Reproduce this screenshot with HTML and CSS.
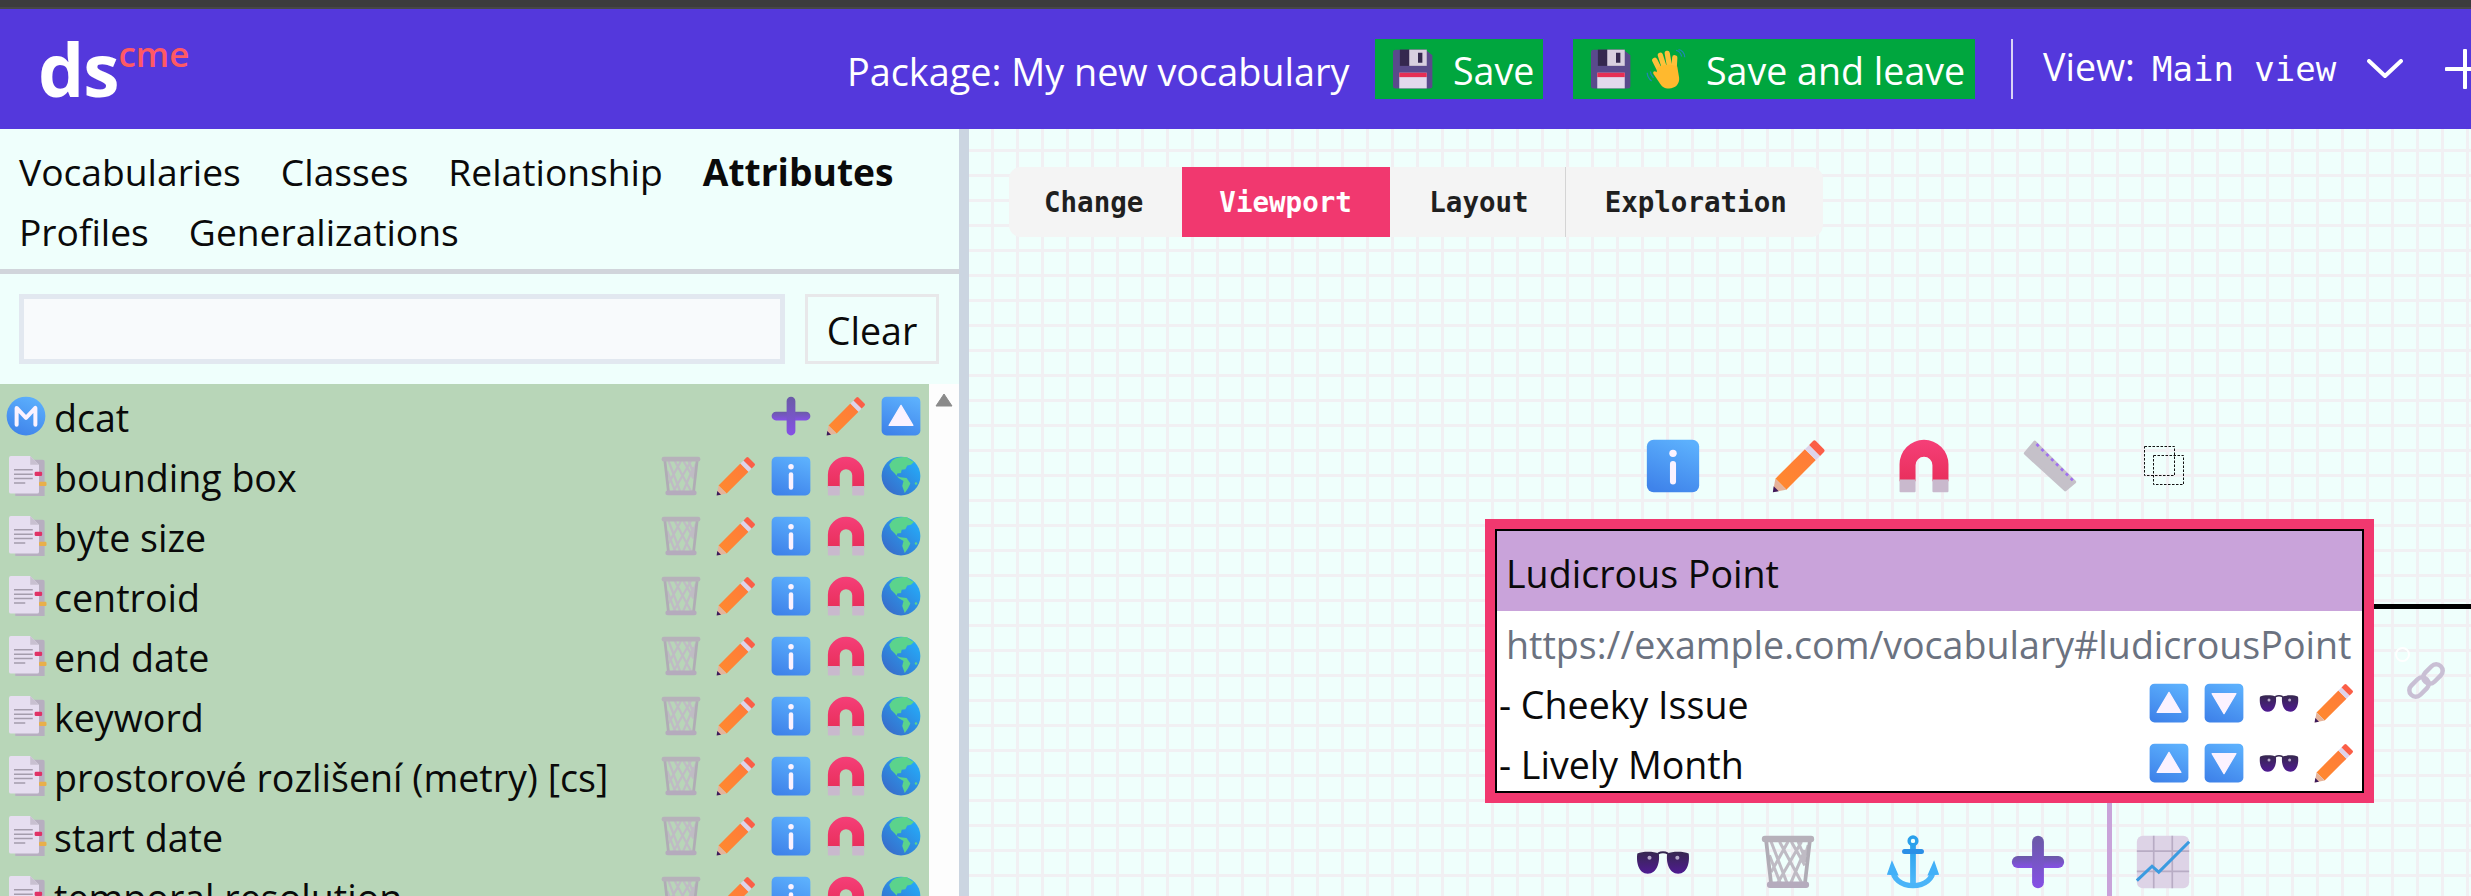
FILE: index.html
```html
<!DOCTYPE html>
<html lang="en">
<head>
<meta charset="utf-8">
<title>Dataspecer CME</title>
<link rel="stylesheet" href="styles.css">
</head>
<body>
<svg class="defs" aria-hidden="true">
  <defs>
    <linearGradient id="gBlue" x1="0.7" y1="0" x2="0.3" y2="1"><stop offset="0" stop-color="#5cb0fd"/><stop offset="1" stop-color="#3f83ea"/></linearGradient>
    <linearGradient id="gMag" x1="0" y1="0" x2="0" y2="1"><stop offset="0" stop-color="#f53f78"/><stop offset="1" stop-color="#e92f5c"/></linearGradient>
    <linearGradient id="gOrange" x1="0" y1="1" x2="1" y2="0"><stop offset="0" stop-color="#ff8a2e"/><stop offset="1" stop-color="#ff7a3a"/></linearGradient>
    <linearGradient id="gGlobe" x1="1" y1="0" x2="0" y2="1"><stop offset="0" stop-color="#22b4ff"/><stop offset="1" stop-color="#3a64c4"/></linearGradient>
    <linearGradient id="gLens" x1="0" y1="0" x2="0" y2="1"><stop offset="0" stop-color="#37284f"/><stop offset="1" stop-color="#4f1a92"/></linearGradient>
    <linearGradient id="gPlus" x1="0" y1="0" x2="0" y2="1"><stop offset="0" stop-color="#6a5ba6"/><stop offset="1" stop-color="#8550e6"/></linearGradient>
    <linearGradient id="gAnchor" x1="0" y1="0" x2="0" y2="1"><stop offset="0" stop-color="#2aa0ec"/><stop offset="1" stop-color="#4fb8fa"/></linearGradient>
    <symbol id="i-info" viewBox="0 0 32 32"><rect x="0.5" y="0.5" width="31" height="31" rx="4" fill="url(#gBlue)"/><circle cx="16" cy="8.5" r="2.2" fill="#fbf2ff"/><rect x="14.2" y="13" width="3.6" height="14" rx="1.8" fill="#fbf2ff"/></symbol>
    <symbol id="i-up" viewBox="0 0 32 32"><rect x="0.5" y="0.5" width="31" height="31" rx="4" fill="url(#gBlue)"/><path d="M16 7.500 25.500 23.500H6.500z" fill="#fbf2ff" stroke="#fbf2ff" stroke-linejoin="round"/></symbol>
    <symbol id="i-down" viewBox="0 0 32 32"><rect x="0.5" y="0.5" width="31" height="31" rx="4" fill="url(#gBlue)"/><path d="M16 24.500 25.500 8.500H6.500z" fill="#fbf2ff" stroke="#fbf2ff" stroke-linejoin="round"/></symbol>
    <symbol id="i-pencil" viewBox="0 0 32 32"><path d="M2 23.500 19.500 6 26 12.500 8.500 30z" fill="url(#gOrange)"/><path d="M19.500 6 22 3.500 28.500 10 26 12.500z" fill="#ded3ea"/><path d="M22 3.500 24.300 1.200a1.200 1.200 0 0 1 1.700 0l4.800 4.800a1.200 1.200 0 0 1 0 1.700L28.500 10z" fill="#fb5e47"/><path d="M2 23.500 8.500 30 .5 31.500z" fill="#e5b39a"/><path d="M1 28 4 31 .5 31.500z" fill="#3c1a5b"/></symbol>
    <symbol id="i-magnet" viewBox="0 0 32 32"><path d="M1.500 25V15a14.500 14.500 0 0 1 29 0V25H21V15.500a5 5 0 0 0-10 0V25z" fill="url(#gMag)"/><path d="M1.500 24h9.500v7a.6.6 0 0 1-.6.6H2.100a.6.6 0 0 1-.6-.6zM21 24h9.500v7a.6.6 0 0 1-.6.6H21.600a.6.6 0 0 1-.6-.6z" fill="#c9b9cd"/></symbol>
    <symbol id="i-globe" viewBox="0 0 32 32"><circle cx="16" cy="16" r="15.500" fill="url(#gGlobe)"/><path d="M9 3.500C12 1 17 .5 21 1l3 2.500 2.500 1L24 7l-3 .5-1.500 3-3 .5-.5 2.500-3 .5-.5 2 3 1 5 .5 3 4.500-2 4-2.500 3.500-2-5.500L18 20l-4-2.500L11 14 8 11 6.500 7z" fill="#5bd38c"/><circle cx="28" cy="22" r="1" fill="#5bd38c"/></symbol>
    <symbol id="i-trash" viewBox="0 0 32 32"><g fill="none" stroke="#bfbbc4" stroke-width="1.800"><path d="M6 4 16 30M11 4l14 26M18 4l8 14M24 4 9 30M16 4 6 22M26 9 17 30M5 12l7 18M28 6l-3 10M22 4l5 12"/></g><path d="M3 3 6 29M29 3 26 29" stroke="#b0acb5" stroke-width="2.200" fill="none"/><rect x="0.500" y="0.500" width="31" height="3.800" rx="1.800" fill="#b6b1ba"/><rect x="3.500" y="27.600" width="25" height="3.800" rx="1.800" fill="#b5abbd"/></symbol>
    <symbol id="i-plus" viewBox="0 0 32 32"><rect x="0.500" y="12.500" width="31" height="7" rx="3.500" fill="url(#gPlus)"/><rect x="12.500" y="0.500" width="7" height="31" rx="3.500" fill="url(#gPlus)"/></symbol>
    <symbol id="i-glasses" viewBox="0 0 32 32"><path d="M.8 11c3-1.500 9.700-1.500 12.700 0 .8 5-1 12-6.500 12S0 16 .8 11zM31.200 11c-3-1.500-9.700-1.500-12.700 0-.8 5 1 12 6.500 12s7-7 6.200-12z" fill="url(#gLens)"/><path d="M13 11c2-1 4-1 6 0" stroke="#35264f" stroke-width="1.200" fill="none"/><circle cx="8" cy="13.500" r="1.200" fill="#b6a9c9"/><circle cx="24.500" cy="13.500" r="1.200" fill="#b6a9c9"/></symbol>
    <symbol id="i-anchor" viewBox="0 0 32 32"><circle cx="16" cy="3.500" r="2.300" fill="none" stroke="#2aa0ec" stroke-width="2"/><rect x="14.300" y="5.500" width="3.400" height="24" fill="url(#gAnchor)"/><rect x="9.500" y="8.300" width="13" height="3" rx="1.500" fill="#2b8fe6"/><path d="M4 20c0 6 5 10 12 10s12-4 12-10" fill="none" stroke="#4ab4f8" stroke-width="3.200"/><path d="M3.500 15 .5 23.500l7 .5zM28.500 15l3 8.500-7 .5z" fill="#42b0f8"/></symbol>
    <symbol id="i-chart" viewBox="0 0 32 32"><rect x="0.500" y="0.500" width="31" height="31" rx="3.500" fill="#ddd3e6"/><path d="M10.500 .5v31M21.500 .5v31M.5 9.500h31M.5 21.500h31" stroke="#b8acc4" stroke-width="1" fill="none"/><path d="M.5 27 9.500 18.500 13.500 22 31.500 4" stroke="#3b9be0" stroke-width="1.800" fill="none"/></symbol>
    <symbol id="i-ruler" viewBox="0 0 32 32"><path d="M1.500 8.500 7 2 30.500 25.500 25 30z" fill="#c5c1c9" stroke="#c5c1c9" stroke-width="2" stroke-linejoin="round"/><path d="M8 3 29.500 24.500" stroke="#a06ff0" stroke-width="1.600" stroke-dasharray="1.800 2.300" fill="none"/></symbol>
    <symbol id="i-select" viewBox="0 0 40 40"><g fill="none" stroke="#111" stroke-width="1" stroke-dasharray="2.500 1.500"><rect x="0.500" y="0.500" width="30" height="29"/><rect x="9.500" y="9.500" width="30" height="29"/></g></symbol>
    <symbol id="i-link" viewBox="0 0 40 40"><g fill="none" stroke-width="4.500" stroke="#c9bfd4"><rect x="-11" y="-6.500" width="22" height="13" rx="6.500" transform="translate(13 26) rotate(-45)"/><rect x="-11" y="-6.500" width="22" height="13" rx="6.500" transform="translate(27 13) rotate(-45)"/></g></symbol>
    <symbol id="i-floppy" viewBox="0 0 32 32"><path d="M2 .5h24L31.500 5v24.500a2 2 0 0 1-2 2H2a2 2 0 0 1-2-2V2.500a2 2 0 0 1 2-2z" fill="#5a4a8c"/><rect x="5.500" y=".5" width="21" height="13" fill="#35284f"/><rect x="13" y=".5" width="14" height="13" fill="#d8cfe0"/><rect x="20" y="3" width="3.500" height="8" fill="#35284f"/><rect x="5" y="19" width="22" height="12.500" fill="#e3d9ec"/><rect x="5" y="19" width="22" height="3.500" fill="#e72e54"/></symbol>
    <symbol id="i-wave" viewBox="0 0 32 32"><g stroke="#ffc03a" stroke-width="4.200" stroke-linecap="round" fill="none"><path d="M11 17 7 9M15 16 11.500 5M19 15 17 3.500M22.500 16 23 7"/></g><path d="M9 15c4-3 12-3 16-1l1.500 9c.5 5-3 8.500-8 8.500-4 0-6-1.500-8-5L6 20c-1-2 1-3 2.500-1.500z" fill="#ffb92e"/><g stroke="#1f87b5" stroke-width="1" fill="none"><path d="M1 19c0 3 1.500 5 3.500 6.500M3.500 18c0 2 1 3.500 2.500 5M24 1c2.500.5 4 2.500 4.500 5M26 .5c2.500 0 5 3 5 6"/></g></symbol>
    <symbol id="i-model" viewBox="0 0 32 32"><circle cx="16" cy="16" r="15.500" fill="url(#gBlue)"/><path d="M8.500 23V9.500L16 17.500 23.500 9.500V23" fill="none" stroke="#fbf2ff" stroke-width="3.200" stroke-linejoin="round" stroke-linecap="round"/></symbol>
    <symbol id="i-doc" viewBox="0 0 32 32"><path d="M5 3h22a1.500 1.500 0 0 1 1.500 1.500v27.500H5z" fill="#b7afc0"/><path d="M1.500 0H17l7 7v21.500a1.500 1.500 0 0 1-1.500 1.500h-21A1.500 1.500 0 0 1 0 28.500V1.500A1.500 1.500 0 0 1 1.500 0z" fill="#e6def0"/><path d="M17 0v7h7z" fill="#c8c0d0"/><path d="M4 11h15M4 14.500h15M4 18h15M4 21.500h9" stroke="#a49cac" stroke-width="1.200" fill="none"/><rect x="20.500" y="12.500" width="6" height="3.500" rx="1" fill="#e03265"/><rect x="24" y="20.500" width="6" height="3.500" rx="1" fill="#e8b04a"/></symbol>
  </defs>
</svg>

<div class="app">
  <div class="topstrip"></div>
  <header class="header">
    <div class="brand"><span class="logo-ds">ds</span><span class="logo-cme">cme</span></div>
    <div class="package">Package: My new vocabulary</div>
    <button class="save save-one"><svg class="ic40"><use href="#i-floppy"/></svg><span>Save</span></button>
    <button class="save save-two"><svg class="ic40"><use href="#i-floppy"/></svg><svg class="ic40 wave"><use href="#i-wave"/></svg><span>Save and leave</span></button>
    <div class="vsep"></div>
    <div class="view">View:<span class="view-name">Main view</span></div>
    <svg class="chevron" viewBox="0 0 36 20"><path d="M2 2 18 17 34 2" fill="none" stroke="#fff" stroke-width="4" stroke-linecap="round" stroke-linejoin="round"/></svg>
    <svg class="addview" viewBox="0 0 40 40"><path d="M20 1.500v37M1.500 20h37" fill="none" stroke="#fff" stroke-width="4" stroke-linecap="round"/></svg>
  </header>

  <main class="main">
    <aside class="sidebar">
      <nav class="tabs">
        <span>Vocabularies</span><span>Classes</span><span>Relationship</span><span class="tab-active">Attributes</span><span>Profiles</span><span>Generalizations</span>
      </nav>
      <div class="search">
        <input class="search-input" type="text" aria-label="Search">
        <button class="clear">Clear</button>
      </div>
      <div class="listwrap">
        <ul class="list">
          <li class="row"><svg class="ic40 lead"><use href="#i-model"/></svg><span class="name">dcat</span><span class="acts"><svg class="ic40"><use href="#i-plus"/></svg><svg class="ic40"><use href="#i-pencil"/></svg><svg class="ic40"><use href="#i-up"/></svg></span></li>
          <li class="row"><svg class="ic40 lead doc"><use href="#i-doc"/></svg><span class="name">bounding box</span><span class="acts"><svg class="ic40"><use href="#i-trash"/></svg><svg class="ic40"><use href="#i-pencil"/></svg><svg class="ic40"><use href="#i-info"/></svg><svg class="ic40"><use href="#i-magnet"/></svg><svg class="ic40"><use href="#i-globe"/></svg></span></li>
          <li class="row"><svg class="ic40 lead doc"><use href="#i-doc"/></svg><span class="name">byte size</span><span class="acts"><svg class="ic40"><use href="#i-trash"/></svg><svg class="ic40"><use href="#i-pencil"/></svg><svg class="ic40"><use href="#i-info"/></svg><svg class="ic40"><use href="#i-magnet"/></svg><svg class="ic40"><use href="#i-globe"/></svg></span></li>
          <li class="row"><svg class="ic40 lead doc"><use href="#i-doc"/></svg><span class="name">centroid</span><span class="acts"><svg class="ic40"><use href="#i-trash"/></svg><svg class="ic40"><use href="#i-pencil"/></svg><svg class="ic40"><use href="#i-info"/></svg><svg class="ic40"><use href="#i-magnet"/></svg><svg class="ic40"><use href="#i-globe"/></svg></span></li>
          <li class="row"><svg class="ic40 lead doc"><use href="#i-doc"/></svg><span class="name">end date</span><span class="acts"><svg class="ic40"><use href="#i-trash"/></svg><svg class="ic40"><use href="#i-pencil"/></svg><svg class="ic40"><use href="#i-info"/></svg><svg class="ic40"><use href="#i-magnet"/></svg><svg class="ic40"><use href="#i-globe"/></svg></span></li>
          <li class="row"><svg class="ic40 lead doc"><use href="#i-doc"/></svg><span class="name">keyword</span><span class="acts"><svg class="ic40"><use href="#i-trash"/></svg><svg class="ic40"><use href="#i-pencil"/></svg><svg class="ic40"><use href="#i-info"/></svg><svg class="ic40"><use href="#i-magnet"/></svg><svg class="ic40"><use href="#i-globe"/></svg></span></li>
          <li class="row"><svg class="ic40 lead doc"><use href="#i-doc"/></svg><span class="name">prostorové rozlišení (metry) [cs]</span><span class="acts"><svg class="ic40"><use href="#i-trash"/></svg><svg class="ic40"><use href="#i-pencil"/></svg><svg class="ic40"><use href="#i-info"/></svg><svg class="ic40"><use href="#i-magnet"/></svg><svg class="ic40"><use href="#i-globe"/></svg></span></li>
          <li class="row"><svg class="ic40 lead doc"><use href="#i-doc"/></svg><span class="name">start date</span><span class="acts"><svg class="ic40"><use href="#i-trash"/></svg><svg class="ic40"><use href="#i-pencil"/></svg><svg class="ic40"><use href="#i-info"/></svg><svg class="ic40"><use href="#i-magnet"/></svg><svg class="ic40"><use href="#i-globe"/></svg></span></li>
          <li class="row"><svg class="ic40 lead doc"><use href="#i-doc"/></svg><span class="name">temporal resolution</span><span class="acts"><svg class="ic40"><use href="#i-trash"/></svg><svg class="ic40"><use href="#i-pencil"/></svg><svg class="ic40"><use href="#i-info"/></svg><svg class="ic40"><use href="#i-magnet"/></svg><svg class="ic40"><use href="#i-globe"/></svg></span></li>
        </ul>
        <div class="scrollbar"><svg class="scroll-up" viewBox="0 0 18 14"><path d="M9 1 17 13H1z" fill="#8a8a8a" stroke="#8a8a8a" stroke-linejoin="round"/></svg></div>
      </div>
    </aside>
    <div class="gutter"></div>
    <section class="canvas">
      <div class="toolbar">
        <button class="tool tool-first">Change</button><button class="tool tool-active">Viewport</button><button class="tool tool-shift">Layout</button><button class="tool tool-last tool-shift">Exploration</button>
      </div>
      <div class="edge-h"></div>
      <div class="edge-v"></div>
      <div class="node-tools node-tools-top">
        <svg class="ic54"><use href="#i-info"/></svg><svg class="ic54"><use href="#i-pencil"/></svg><svg class="ic54"><use href="#i-magnet"/></svg><svg class="ic54"><use href="#i-ruler"/></svg><svg class="ic40 select-ic"><use href="#i-select"/></svg>
      </div>
      <article class="node">
        <div class="node-inner">
          <div class="node-title">Ludicrous Point</div>
          <div class="node-url">https://example.com/vocabulary#ludicrousPoint</div>
          <div class="attr"><span class="attr-name">- Cheeky Issue</span><span class="acts"><svg class="ic40"><use href="#i-up"/></svg><svg class="ic40"><use href="#i-down"/></svg><svg class="ic40"><use href="#i-glasses"/></svg><svg class="ic40"><use href="#i-pencil"/></svg></span></div>
          <div class="attr attr-last"><span class="attr-name">- Lively Month</span><span class="acts"><svg class="ic40"><use href="#i-up"/></svg><svg class="ic40"><use href="#i-down"/></svg><svg class="ic40"><use href="#i-glasses"/></svg><svg class="ic40"><use href="#i-pencil"/></svg></span></div>
        </div>
      </article>
      <div class="node-tools node-tools-bottom">
        <svg class="ic54"><use href="#i-glasses"/></svg><svg class="ic54"><use href="#i-trash"/></svg><svg class="ic54"><use href="#i-anchor"/></svg><svg class="ic54"><use href="#i-plus"/></svg><svg class="ic54"><use href="#i-chart"/></svg>
      </div>
      <div class="ring"></div>
      <svg class="ic40 edge-link"><use href="#i-link"/></svg>
    </section>
  </main>
</div>
</body>
</html>
```

FILE: styles.css
```css
* { box-sizing: border-box; }
html, body { margin: 0; padding: 0; height: 100%; overflow: hidden; }
body { font-family: "Open Sans", "Noto Sans", sans-serif; font-size: 37.600px; color: #0a0a0a; background: #effffc; }
button { font: inherit; color: inherit; background: none; border: 0; margin: 0; }
ul { list-style: none; margin: 0; padding: 0; }
.defs { position: absolute; width: 0; height: 0; overflow: hidden; }
.ic40 { width: 40px; height: 40px; flex: none; display: block; }
.ic54 { width: 54px; height: 54px; flex: none; display: block; }

.app { width: 2471px; height: 896px; display: flex; flex-direction: column; overflow: hidden; }
.topstrip { height: 9px; flex: none; background: #3c3c3c; border-bottom: 2px solid #474747; }

.header { height: 120px; flex: none; background: #5438dc; color: #fff; display: flex; align-items: center; white-space: nowrap; }
.brand { width: 847px; flex: none; padding-left: 38px; display: flex; align-items: flex-start; height: 120px; }
.logo-ds { font-weight: 700; font-size: 73px; line-height: 96px; margin-top: 12px; letter-spacing: -1px; }
.logo-cme { font-weight: 600; font-size: 35px; line-height: 48px; margin-top: 21px; color: #ff5964; }
.package { width: 528px; flex: none; margin-top: 4px; font-size: 37.800px; }
.save { height: 60px; flex: none; background: #00a63e; color: #fff; display: flex; align-items: center; padding: 0 10px 0 18px; }
.save span { margin-left: 20px; margin-top: 2px; }
.save-one { width: 168px; margin-right: 30px; }
.save-two { width: 402px; }
.wave { margin-left: 15px; }
.vsep { width: 2px; height: 60px; flex: none; background: #d9d3f5; margin-left: 36px; }
.view { flex: none; margin-left: 30px; margin-bottom: 6px; width: 324px; }
.view-name { font-family: "DejaVu Sans Mono", monospace; font-size: 34px; margin-left: 17px; }
.chevron { width: 36px; height: 20px; flex: none; }
.addview { width: 40px; height: 40px; flex: none; margin-left: 42px; }

.main { flex: 1; min-height: 0; display: flex; }
.sidebar { width: 959px; flex: none; background: #effffc; display: flex; flex-direction: column; }
.gutter { width: 10px; flex: none; background: #cbd5e1; }
.tabs { height: 145px; flex: none; padding: 13px 19px 0; display: flex; flex-wrap: wrap; column-gap: 40px; align-content: flex-start; border-bottom: 5px solid #d1d5db; line-height: 60px; font-size: 37.200px; }
.tab-active { font-weight: 700; }
.search { flex: none; display: flex; gap: 20px; padding: 20px 20px 20px 19px; }
.search-input { width: 766px; height: 70px; border: 5px solid #e2e8f0; background: #f8fafc; outline: 0; font: inherit; }
.clear { width: 134px; height: 70px; border: 3px solid #e8e8ea; padding: 2px 0 0; }
.listwrap { flex: 1; min-height: 0; display: flex; overflow: hidden; }
.list { width: 929px; flex: none; background: #b8d6b8; }
.row { height: 60px; display: flex; align-items: center; padding: 0 8px 0 6px; white-space: nowrap; }
.lead { margin-right: 8px; margin-top: 4px; }
.doc { margin-left: 3px; margin-right: 5px; width: 40px; }
.name { flex: 1; margin-top: 6px; }
.acts { display: flex; gap: 15px; flex: none; }
.row .acts { margin-top: 4px; }
.scrollbar { flex: 1; background: #fdfdfd; padding: 9px 6px 0; }
.scroll-up { width: 18px; height: 14px; display: block; }

.canvas { flex: 1; min-width: 0; position: relative; overflow: hidden; background-color: #effffc; background-image: linear-gradient(to right, transparent 21.500px, #f1f0f3 21.500px, #f1f0f3 24.500px, transparent 24.500px), linear-gradient(to bottom, transparent 20.500px, #f1f0f3 20.500px, #f1f0f3 23.500px, transparent 23.500px); background-size: 25px 25px; }
.toolbar { position: absolute; left: 40px; top: 38px; display: flex; height: 70px; background: #f4f4f4; border-radius: 12px; overflow: hidden; }
.tool { height: 70px; padding: 0 37.500px; font-family: "DejaVu Sans Mono", monospace; font-weight: 700; font-size: 27.500px; color: #1f1f1f; border-right: 1.500px solid transparent; white-space: nowrap; }
.tool-first { padding-left: 35px; }
.tool-shift { padding-left: 39px; padding-right: 36px; }
.tool:nth-child(3) { border-right-color: #d4d4d4; }
.tool-last { border-right: 0; }
.tool-active { background: #f1386f; color: #fff; }

.node { position: absolute; left: 516px; top: 390px; width: 889px; height: 284px; border: 10px solid #f1386f; background: #fff; }
.node-inner { height: 264px; border: 2px solid #000; overflow: hidden; }
.node-title { height: 80px; background: #c9a3da; padding-left: 9px; line-height: 86px; white-space: nowrap; }
.node-url { height: 62px; padding-left: 9px; line-height: 68px; color: #6b7280; white-space: nowrap; }
.attr { height: 60px; display: flex; align-items: center; padding: 0 8px 0 2px; white-space: nowrap; }
.attr-name { flex: 1; margin-top: 2px; }

.node-tools { position: absolute; display: flex; align-items: center; }
.node-tools-top { left: 677px; top: 310px; gap: 71.500px; }
.select-ic { margin-left: -4px; }
.node-tools-bottom { left: 667px; top: 706px; gap: 71px; }
.edge-h { position: absolute; left: 1405px; right: 0; top: 475px; height: 5px; background: #000; }
.edge-v { position: absolute; left: 1138px; top: 674px; bottom: 0; width: 4.500px; background: #c9a3da; }
.ring { position: absolute; left: 1426px; top: 518px; width: 15px; height: 15px; border: 2px solid #fff; border-radius: 50%; }
.edge-link { position: absolute; left: 1437px; top: 532px; }
```
